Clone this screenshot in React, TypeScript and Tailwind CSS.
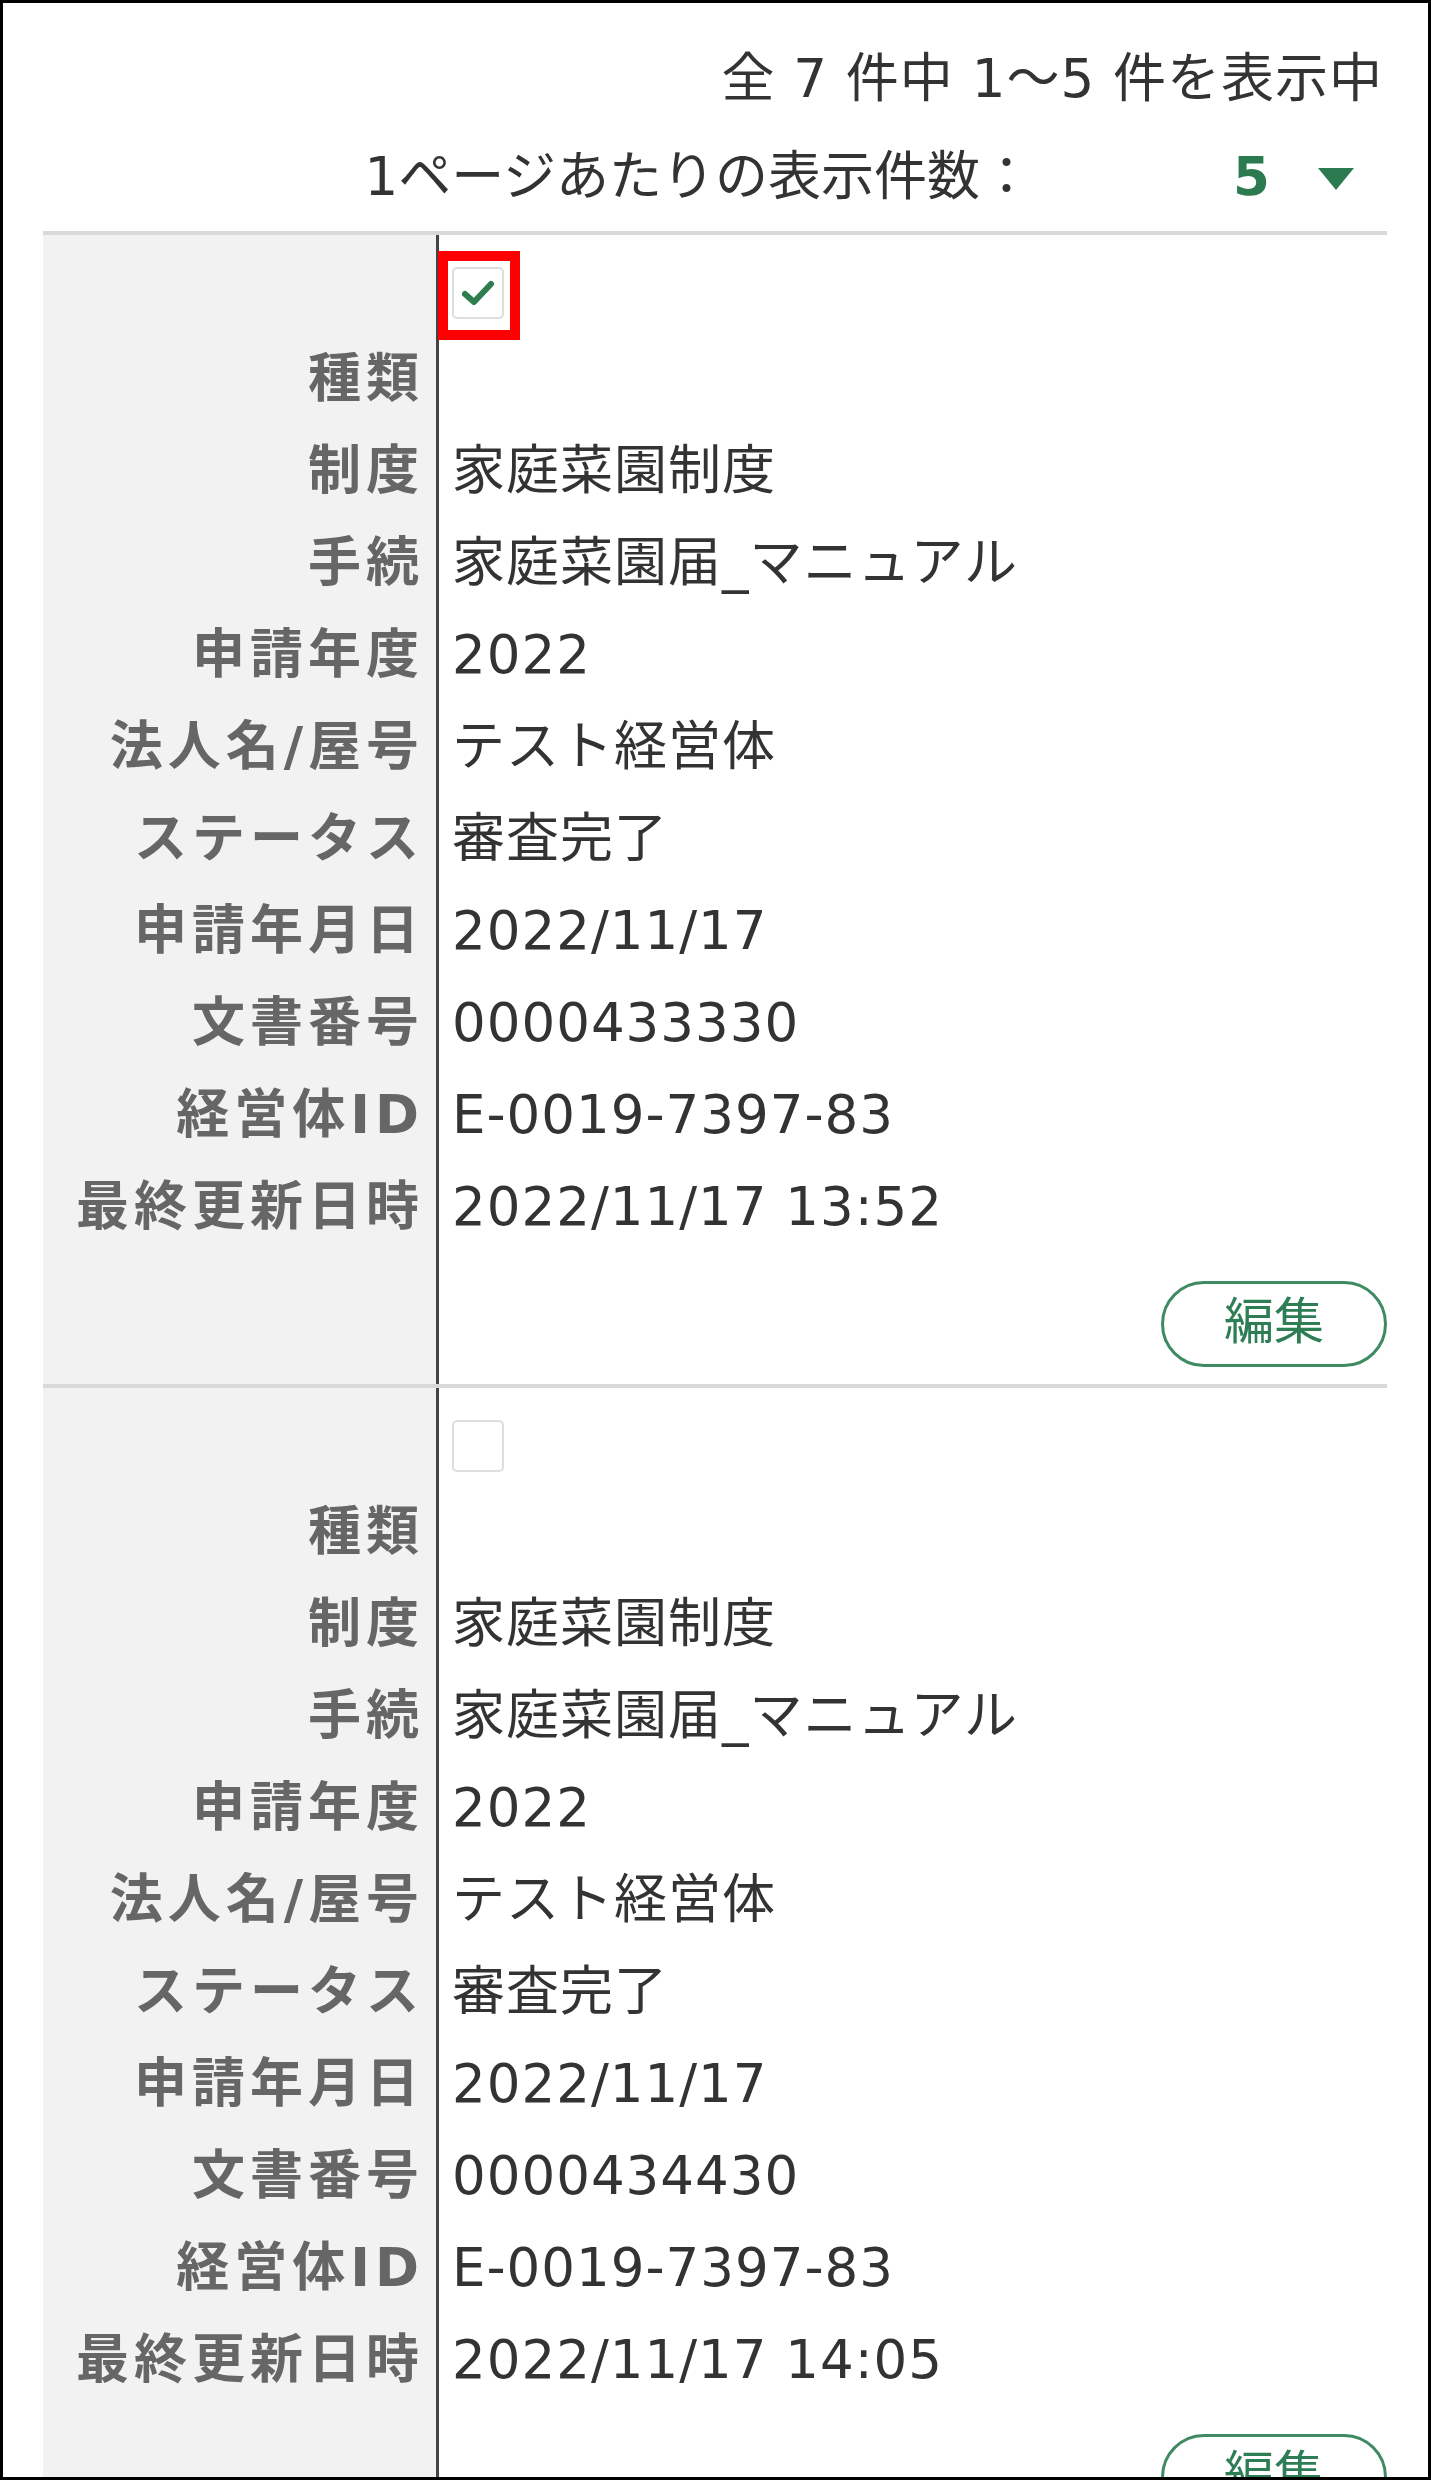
import { Fragment } from 'react';

type Entry = {
  checked: boolean;
  docNo: string;
  updated: string;
};

const entries: Entry[] = [
  { checked: true, docNo: '0000433330', updated: '2022/11/17 13:52' },
  { checked: false, docNo: '0000434430', updated: '2022/11/17 14:05' },
];

function fieldsOf(e: Entry) {
  return [
    ['種類', ''],
    ['制度', '家庭菜園制度'],
    ['手続', '家庭菜園届_マニュアル'],
    ['申請年度', '2022'],
    ['法人名/屋号', 'テスト経営体'],
    ['ステータス', '審査完了'],
    ['申請年月日', '2022/11/17'],
    ['文書番号', e.docNo],
    ['経営体ID', 'E-0019-7397-83'],
    ['最終更新日時', e.updated],
  ];
}

function Checkbox({ checked }: { checked: boolean }) {
  return (
    <div className="relative w-[52px] h-[52px] rounded-[5px] border-2 border-[#dedede] bg-white flex items-center justify-center">
      {checked && (
        <svg width="32" height="26" viewBox="0 0 32 26" fill="none">
          <path d="M3 14 L12 22 L29 4" stroke="#2e7d4f" strokeWidth="6" strokeLinecap="round" strokeLinejoin="round" />
        </svg>
      )}
      {checked && (
        <div className="absolute left-[-16px] top-[-18px] w-[82px] h-[89px] border-[10px] border-[#ff0000]" />
      )}
    </div>
  );
}

function Record({ entry }: { entry: Entry }) {
  const fields = fieldsOf(entry);
  return (
    <div className="flex border-t-4 border-[#d9d9d9]">
      <div className="w-[396px] shrink-0 bg-[#f2f2f2] border-r-[3px] border-[#444] pt-[94px]">
        {fields.map(([label]) => (
          <div key={label} className="h-[92px] pt-[6px] flex items-center justify-end pr-[12px] font-bold text-[#666] tracking-[5px]">
            {label}
          </div>
        ))}
      </div>
      <div className="flex-1 pl-[13px] pt-[32px]">
        <div className="mb-[10px]">
          <Checkbox checked={entry.checked} />
        </div>
        {fields.map(([label, value]) => (
          <Fragment key={label}>
            <div className="h-[92px] pt-[6px] flex items-center text-[#333] tracking-[1px]">{value}</div>
          </Fragment>
        ))}
        <div className="flex justify-end mt-[32px] mb-[17px]">
          <button className="w-[226px] h-[86px] pb-[4px] rounded-full border-[3px] border-[#3f8a63] text-[#2d7d55] text-[50px] leading-none bg-white">
            編集
          </button>
        </div>
      </div>
    </div>
  );
}

export default function App() {
  return (
    <div
      className="h-[2480px] overflow-hidden border-[3px] border-black bg-white text-[53px] leading-none"
      style={{ fontFamily: '"DejaVu Sans", "Noto Sans CJK JP", sans-serif' }}
    >
      <div className="pl-[40px] pr-[41px]">
        <div className="pt-[35px] pr-[4px] h-[80px] flex items-center justify-end text-[#333] tracking-[1px] box-content">
          全 7 件中 1～5 件を表示中
        </div>
        <div className="mt-[18px] h-[80px] flex items-center justify-end text-[#333]">
          <span>1ページあたりの表示件数：</span>
          <span className="ml-[200px] font-bold text-[#2b7a50]">5</span>
          <svg className="ml-[48px] mr-[33px] mt-[6px]" width="36" height="22" viewBox="0 0 36 22">
            <path d="M0 0 H36 L18 22 Z" fill="#2b7a50" />
          </svg>
        </div>
        <div className="mt-[15px]">
          {entries.map((e) => (
            <Record key={e.docNo} entry={e} />
          ))}
        </div>
      </div>
    </div>
  );
}
